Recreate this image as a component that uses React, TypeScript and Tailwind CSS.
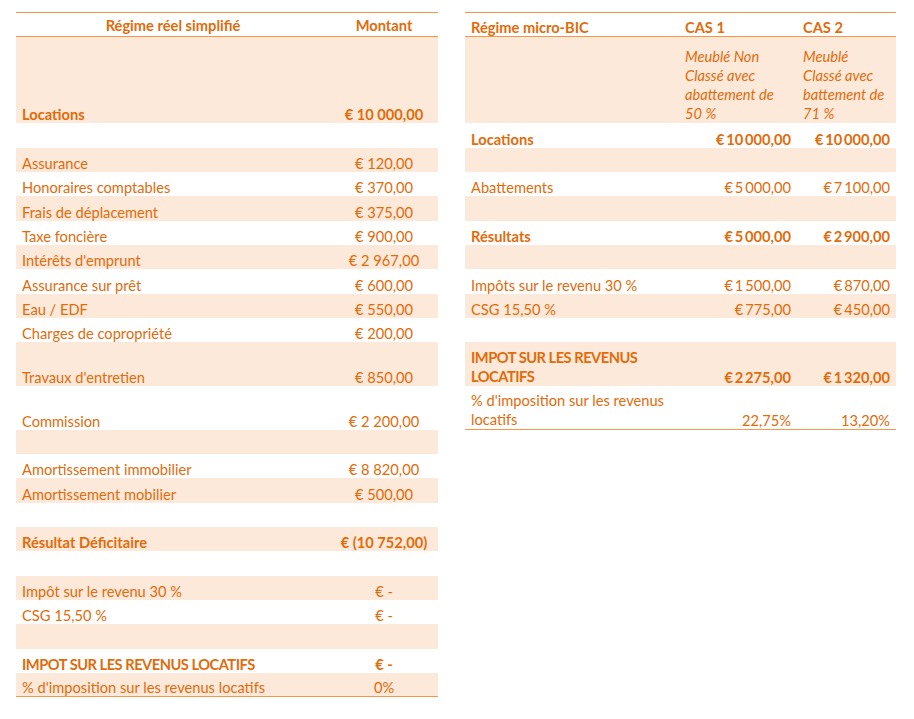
import React from 'react';

type LeftRow = { label?: string; value?: string; h: number; bold?: boolean; tight?: boolean };

const leftRows: LeftRow[] = [
  { label: 'Locations', value: '€ 10 000,00', h: 86, bold: true },
  { h: 25 },
  { label: 'Assurance', value: '€ 120,00', h: 24 },
  { label: 'Honoraires comptables', value: '€ 370,00', h: 24 },
  { label: 'Frais de déplacement', value: '€ 375,00', h: 25 },
  { label: 'Taxe foncière', value: '€ 900,00', h: 24 },
  { label: "Intérêts d'emprunt", value: '€ 2 967,00', h: 24 },
  { label: 'Assurance sur prêt', value: '€ 600,00', h: 25 },
  { label: 'Eau / EDF', value: '€ 550,00', h: 24 },
  { label: 'Charges de copropriété', value: '€ 200,00', h: 24 },
  { label: "Travaux d'entretien", value: '€ 850,00', h: 44 },
  { label: 'Commission', value: '€ 2 200,00', h: 44 },
  { h: 24 },
  { label: 'Amortissement immobilier', value: '€ 8 820,00', h: 24 },
  { label: 'Amortissement mobilier', value: '€ 500,00', h: 25 },
  { h: 24 },
  { label: 'Résultat Déficitaire', value: '€ (10 752,00)', h: 24, bold: true },
  { h: 25 },
  { label: 'Impôt sur le revenu 30 %', value: '€ -', h: 24 },
  { label: 'CSG 15,50 %', value: '€ -', h: 24 },
  { h: 25 },
  { label: 'IMPOT SUR LES REVENUS LOCATIFS', value: '€ -', h: 24, bold: true, tight: true },
  { label: "% d'imposition sur les revenus locatifs", value: '0%', h: 24 },
];

type RightRow = {
  label?: React.ReactNode;
  a?: React.ReactNode;
  b?: React.ReactNode;
  h: number;
  bold?: boolean;
  italic?: boolean;
  multi?: boolean;
  tight?: boolean;
};

// thin spaces: the micro-BIC amounts are set tighter than the left table
const rightRows: RightRow[] = [
  {
    a: (<>Meublé Non<br />Classé avec<br />abattement de<br />50 %</>),
    b: (<>Meublé<br />Classé avec<br />battement de<br />71 %</>),
    h: 86,
    italic: true,
    multi: true,
  },
  { label: 'Locations', a: '€\u200910\u2009000,00', b: '€\u200910\u2009000,00', h: 25, bold: true },
  { h: 24 },
  { label: 'Abattements', a: '€\u20095\u2009000,00', b: '€\u20097\u2009100,00', h: 24 },
  { h: 25 },
  { label: 'Résultats', a: '€\u20095\u2009000,00', b: '€\u20092\u2009900,00', h: 24, bold: true },
  { h: 24 },
  { label: 'Impôts sur le revenu 30 %', a: '€\u20091\u2009500,00', b: '€\u2009870,00', h: 25 },
  { label: 'CSG 15,50 %', a: '€\u2009775,00', b: '€\u2009450,00', h: 24 },
  { h: 24 },
  {
    label: (<>IMPOT SUR LES REVENUS<br />LOCATIFS</>),
    a: '€\u20092\u2009275,00',
    b: '€\u20091\u2009320,00',
    h: 44,
    bold: true,
    multi: true,
    tight: true,
  },
  { label: (<>% d'imposition sur les revenus<br />locatifs</>), a: '22,75%', b: '13,20%', h: 44, multi: true },
];

function LeftTable() {
  return (
    <div className="w-[422px] border-t border-[#F79646]">
      <div className="flex h-[24px] items-center pt-[2px] border-b border-[#F79646] font-bold">
        <div className="w-[314px] text-center">Régime réel simplifié</div>
        <div className="w-[108px] text-center">Montant</div>
      </div>
      {leftRows.map((r, i) => (
        <div
          key={i}
          style={{ height: r.h }}
          className={`flex items-end leading-[17px] ${i % 2 === 0 ? 'bg-[#FDE9D9]' : ''} ${r.bold ? 'font-bold' : ''} ${i === leftRows.length - 1 ? 'border-b border-[#F79646]' : ''}`}
        >
          <div className={`w-[314px] pl-[6px] whitespace-nowrap ${r.tight ? 'tracking-[-0.5px]' : ''}`}>{r.label}</div>
          <div className="w-[108px] text-center whitespace-nowrap">{r.value}</div>
        </div>
      ))}
    </div>
  );
}

function RightTable() {
  return (
    <div className="w-[431px] border-t border-[#F79646]">
      <div className="flex h-[24px] items-end leading-[17px] border-b border-[#F79646] font-bold">
        <div className="w-[215px] pl-[6px]">Régime micro-BIC</div>
        <div className="w-[117px] pl-[5px]">CAS 1</div>
        <div className="w-[99px] pl-[6px]">CAS 2</div>
      </div>
      {rightRows.map((r, i) => (
        <div
          key={i}
          style={{ height: r.h }}
          className={`flex items-end ${r.multi ? 'leading-[19px]' : 'leading-[17px]'} ${i % 2 === 0 ? 'bg-[#FDE9D9]' : ''} ${r.bold ? 'font-bold' : ''} ${i === rightRows.length - 1 ? 'border-b border-[#F79646]' : ''}`}
        >
          <div className={`w-[215px] pl-[6px] whitespace-nowrap ${r.tight ? 'tracking-[-0.5px]' : ''}`}>{r.label}</div>
          {r.italic ? (
            <>
              <div className="w-[117px] pl-[5px] italic">{r.a}</div>
              <div className="w-[99px] pl-[6px] italic">{r.b}</div>
            </>
          ) : (
            <>
              <div className="w-[117px] pr-[6px] text-right whitespace-nowrap leading-[17px]">{r.a}</div>
              <div className="w-[99px] pr-[6px] text-right whitespace-nowrap leading-[17px]">{r.b}</div>
            </>
          )}
        </div>
      ))}
    </div>
  );
}

export default function App() {
  return (
    <div className="min-h-[719px] w-[914px] bg-white pt-[12px] pl-[16px] text-[14.67px] text-[#E26B0A] font-['Lato',sans-serif]">
      <div className="flex items-start gap-[27px]">
        <LeftTable />
        <RightTable />
      </div>
    </div>
  );
}
